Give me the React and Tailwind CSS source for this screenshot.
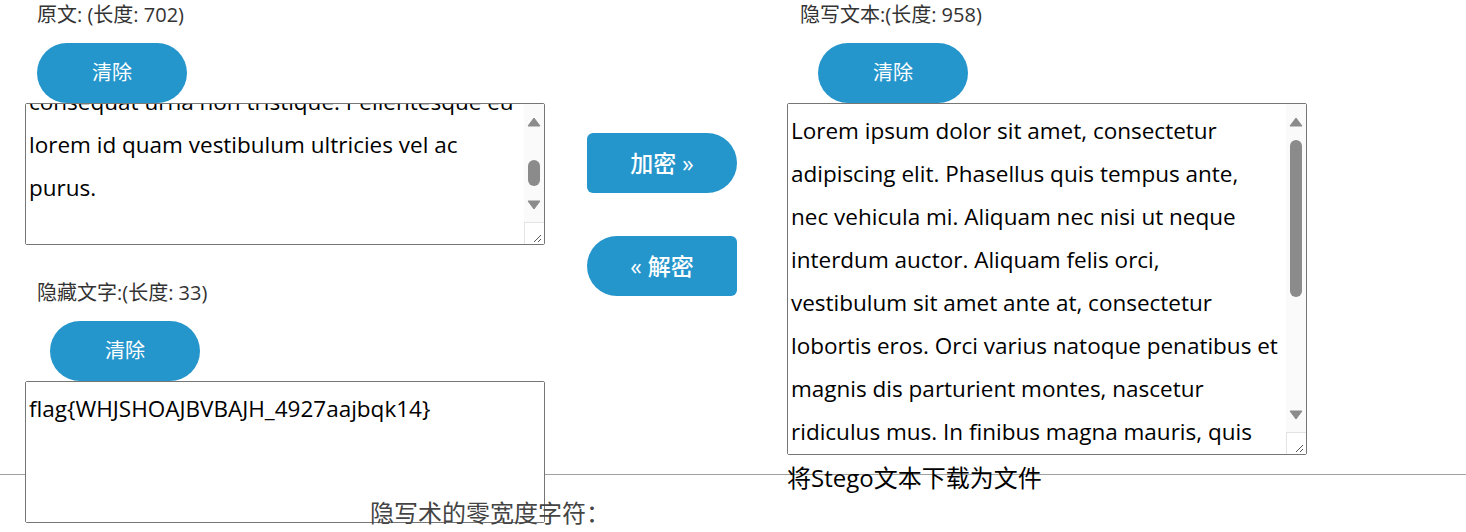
import React, { useEffect, useRef } from 'react';

const ORIGINAL =
  'Lorem ipsum dolor sit amet, consectetur adipiscing elit. Phasellus quis tempus ante, nec vehicula mi. Aliquam nec nisi ut neque interdum auctor. Aliquam felis orci, vestibulum sit amet ante at, consectetur lobortis eros. Orci varius natoque penatibus et magnis dis parturient montes, nascetur ridiculus mus. In finibus magna mauris, quis auctor libero congue quis. Duis sagittis consequat scelerisque. Praesent sed ipsum sit amet mauris tempor fringilla. Aliquam erat volutpat. Suspendisse at lorem eu ante pulvinar congue. Nam ultrices magna ut risus luctus, vel pellentesque ipsum maximus. Integer a mi dolor. Sed sollicitudin, ligula nec volutpat iaculis, nisl nisl\nconsequat urna non tristique. Pellentesque eu\nlorem id quam vestibulum ultricies vel ac\npurus.';

const STEGO =
  'Lorem ipsum dolor sit amet, consectetur\nadipiscing elit. Phasellus quis tempus ante,\nnec vehicula mi. Aliquam nec nisi ut neque\ninterdum auctor. Aliquam felis orci,\nvestibulum sit amet ante at, consectetur\nlobortis eros. Orci varius natoque penatibus et\nmagnis dis parturient montes, nascetur\nridiculus mus. In finibus magna mauris, quis\nauctor libero congue quis. Duis sagittis consequat scelerisque. Praesent sed ipsum sit amet mauris tempor fringilla.';

const HIDDEN = 'flag{WHJSHOAJBVBAJH_4927aajbqk14}';

const font = { fontFamily: '"Open Sans", "Noto Sans CJK SC", sans-serif' };

const areaCls =
  'block min-w-0 flex-1 resize-none overflow-hidden bg-white pl-[3px] pr-0 pt-[5px] text-[22.5px] leading-[43px] text-black outline-none';

// light classic scrollbar with a resize grip under it
function Rail({ thumbTop, thumbHeight }) {
  return (
    <div className="flex w-[20px] shrink-0 flex-col bg-[#fafafa]">
      <div className="flex h-[34px] shrink-0 items-center justify-center pt-[2px]">
        <svg width="14" height="10" viewBox="0 0 14 10">
          <path d="M7 1 L13 9 L1 9 Z" fill="#8b8b8b" stroke="#8b8b8b" strokeLinejoin="round" />
        </svg>
      </div>
      <div className="flex flex-1 flex-col items-center">
        <div className="shrink-0" style={{ height: thumbTop }} />
        <div className="w-[12px] shrink-0 rounded-full bg-[#8b8b8b]" style={{ height: thumbHeight }} />
      </div>
      <div className="flex h-[34px] shrink-0 items-center justify-center">
        <svg width="14" height="10" viewBox="0 0 14 10">
          <path d="M1 1 L13 1 L7 9 Z" fill="#8b8b8b" stroke="#8b8b8b" strokeLinejoin="round" />
        </svg>
      </div>
      <div className="h-[22px] shrink-0 border-l border-t border-[#e3e3e3] bg-white">
        <svg width="19" height="21" viewBox="0 0 19 21">
          <path d="M9 19 L16 12 M13 19 L16 16" stroke="#555" strokeWidth="1" />
        </svg>
      </div>
    </div>
  );
}

function Label({ children, className = '' }) {
  return (
    <div className={`h-[30px] text-[20px] leading-[30px] text-[#333] ${className}`}>{children}</div>
  );
}

function ClearButton({ className = '' }) {
  return (
    <button
      className={`block h-[60px] w-[150px] rounded-full bg-[#2596cc] text-[20px] text-white ${className}`}
    >
      清除
    </button>
  );
}

export default function App() {
  const origRef = useRef(null);

  useEffect(() => {
    const el = origRef.current;
    if (el) {
      // last line ("purus.") sits in the middle of the box, space left under it
      const lines = Math.round((el.scrollHeight - 41) / 43);
      el.scrollTop = (lines - 1) * 43 - 57;
    }
  }, []);

  return (
    <div className="h-[532px] w-[1466px] overflow-hidden bg-white" style={font}>
      <div className="flex h-[474px]">
        {/* left column */}
        <div className="ml-[25px] w-[520px] shrink-0">
          <Label className="pl-[12px]">原文: (长度: 702)</Label>
          <ClearButton className="ml-[12px] mt-[13px]" />
          <div className="flex h-[142px] rounded-[2px] border border-[#767676] bg-white">
            <textarea ref={origRef} className={`${areaCls} pb-[36px]`} defaultValue={ORIGINAL} />
            <Rail thumbTop={22} thumbHeight={26} />
          </div>
          <Label className="mt-[33px] pl-[12px]">隐藏文字:(长度: 33)</Label>
          <ClearButton className="ml-[25px] mt-[13px]" />
          <div className="flex h-[142px] rounded-[2px] border border-[#767676] bg-white">
            <textarea className={`${areaCls} pb-[2px] pr-[20px]`} defaultValue={HIDDEN} />
          </div>
        </div>

        {/* middle buttons */}
        <div className="ml-[42px] w-[150px] shrink-0 pt-[133px]">
          <button className="block h-[60px] w-[150px] rounded-l-[6px] rounded-r-[30px] bg-[#2596cc] text-[23px] font-medium text-white">
            加密 »
          </button>
          <button className="mt-[43px] block h-[60px] w-[150px] rounded-l-[30px] rounded-r-[6px] bg-[#2596cc] text-[23px] font-medium text-white">
            « 解密
          </button>
        </div>

        {/* right column */}
        <div className="ml-[50px] w-[520px] shrink-0">
          <Label className="pl-[13px]">隐写文本:(长度: 958)</Label>
          <ClearButton className="ml-[31px] mt-[13px]" />
          <div className="flex h-[352px] rounded-[2px] border border-[#767676] bg-white">
            <textarea className={`${areaCls} pb-[2px]`} defaultValue={STEGO} />
            <Rail thumbTop={2} thumbHeight={157} />
          </div>
          <div className="mt-[8px] text-[24px] leading-[30px] text-black">将Stego文本下载为文件</div>
        </div>
      </div>

      <div className="border-t border-[#a0a0a0]" />
      <div className="ml-[370px] mt-[23px] text-[24px] leading-[30px] text-[#444]">隐写术的零宽度字符：</div>
    </div>
  );
}
